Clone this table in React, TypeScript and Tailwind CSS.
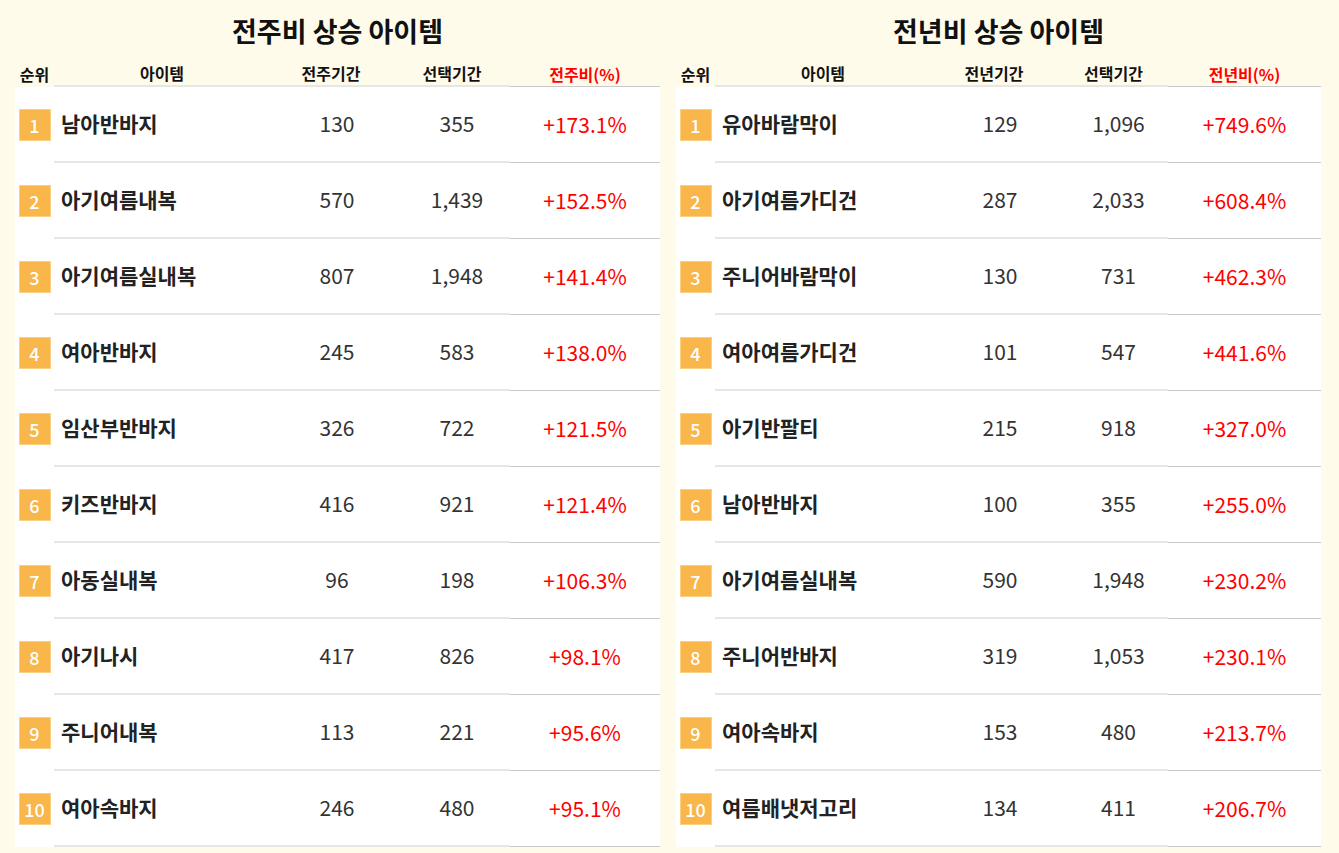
import React from "react";

type Row = { name: string; prev: string; cur: string; pct: string };

const WEEK: Row[] = [
  { name: "남아반바지", prev: "130", cur: "355", pct: "+173.1%" },
  { name: "아기여름내복", prev: "570", cur: "1,439", pct: "+152.5%" },
  { name: "아기여름실내복", prev: "807", cur: "1,948", pct: "+141.4%" },
  { name: "여아반바지", prev: "245", cur: "583", pct: "+138.0%" },
  { name: "임산부반바지", prev: "326", cur: "722", pct: "+121.5%" },
  { name: "키즈반바지", prev: "416", cur: "921", pct: "+121.4%" },
  { name: "아동실내복", prev: "96", cur: "198", pct: "+106.3%" },
  { name: "아기나시", prev: "417", cur: "826", pct: "+98.1%" },
  { name: "주니어내복", prev: "113", cur: "221", pct: "+95.6%" },
  { name: "여아속바지", prev: "246", cur: "480", pct: "+95.1%" },
];

const YEAR: Row[] = [
  { name: "유아바람막이", prev: "129", cur: "1,096", pct: "+749.6%" },
  { name: "아기여름가디건", prev: "287", cur: "2,033", pct: "+608.4%" },
  { name: "주니어바람막이", prev: "130", cur: "731", pct: "+462.3%" },
  { name: "여아여름가디건", prev: "101", cur: "547", pct: "+441.6%" },
  { name: "아기반팔티", prev: "215", cur: "918", pct: "+327.0%" },
  { name: "남아반바지", prev: "100", cur: "355", pct: "+255.0%" },
  { name: "아기여름실내복", prev: "590", cur: "1,948", pct: "+230.2%" },
  { name: "주니어반바지", prev: "319", cur: "1,053", pct: "+230.1%" },
  { name: "여아속바지", prev: "153", cur: "480", pct: "+213.7%" },
  { name: "여름배냇저고리", prev: "134", cur: "411", pct: "+206.7%" },
];

interface Props {
  title: string;
  prevLabel: string;
  pctLabel: string;
  rows: Row[];
  cols: string;
}

function RankTable({ title, prevLabel, pctLabel, rows, cols }: Props) {
  return (
    <div className="w-[645px] flex flex-col">
      {/* Title */}
      <div className="h-[60px] flex items-center justify-center text-[27px] font-bold text-[#111]">
        {title}
      </div>

      {/* Header */}
      <div className={`grid ${cols} h-[26px] items-center text-[16px] font-bold text-[#111]`}>
        <div className="text-center">순위</div>
        <div className="text-center h-full flex items-center justify-center border-b-2 border-[#e6e6e6]">아이템</div>
        <div className="text-center h-full flex items-center justify-center pr-[12px] border-b-2 border-[#e6e6e6]">{prevLabel}</div>
        <div className="text-center h-full flex items-center justify-center pr-[10px] border-b-2 border-[#e6e6e6]">선택기간</div>
        <div className="text-center h-full flex items-center justify-center text-[#ff0000] border-b border-[#c8c8c8]">{pctLabel}</div>
      </div>

      {/* Rows */}
      <div className="bg-white">
        {rows.map((r, i) => (
          <div key={i} className={`grid ${cols} h-[76px] items-stretch`}>
            <div className="flex items-center justify-center">
              <span className="w-[32px] h-[32px] flex items-center justify-center bg-[#f8b64b] border border-[#fbcf80] text-white text-[18px] font-medium">
                {i + 1}
              </span>
            </div>
            <div className="flex items-center pl-[7px] text-[21px] font-bold text-[#222] border-b-2 border-[#e6e6e6]">
              {r.name}
            </div>
            <div className="flex items-center justify-center text-[21px] text-[#333] border-b-2 border-[#e6e6e6]">
              {r.prev}
            </div>
            <div className="flex items-center justify-center text-[21px] text-[#333] border-b-2 border-[#e6e6e6]">
              {r.cur}
            </div>
            <div className="flex items-center justify-center text-[21px] text-[#ff0000] border-b border-[#c8c8c8]">
              {r.pct}
            </div>
          </div>
        ))}
      </div>
    </div>
  );
}

export default function App() {
  return (
    <div
      className="w-[1339px] h-[853px] bg-[#fffbeb] flex gap-[16px] pl-[15px] pt-px overflow-hidden"
      style={{ fontFamily: '"Noto Sans CJK KR", "Noto Sans", sans-serif' }}
    >
      <RankTable
        title="전주비 상승 아이템"
        prevLabel="전주기간"
        pctLabel="전주비(%)"
        rows={WEEK}
        cols="grid-cols-[39px_216px_134px_106px_150px]"
      />
      <RankTable
        title="전년비 상승 아이템"
        prevLabel="전년기간"
        pctLabel="전년비(%)"
        rows={YEAR}
        cols="grid-cols-[39px_216px_138px_99px_153px]"
      />
    </div>
  );
}
